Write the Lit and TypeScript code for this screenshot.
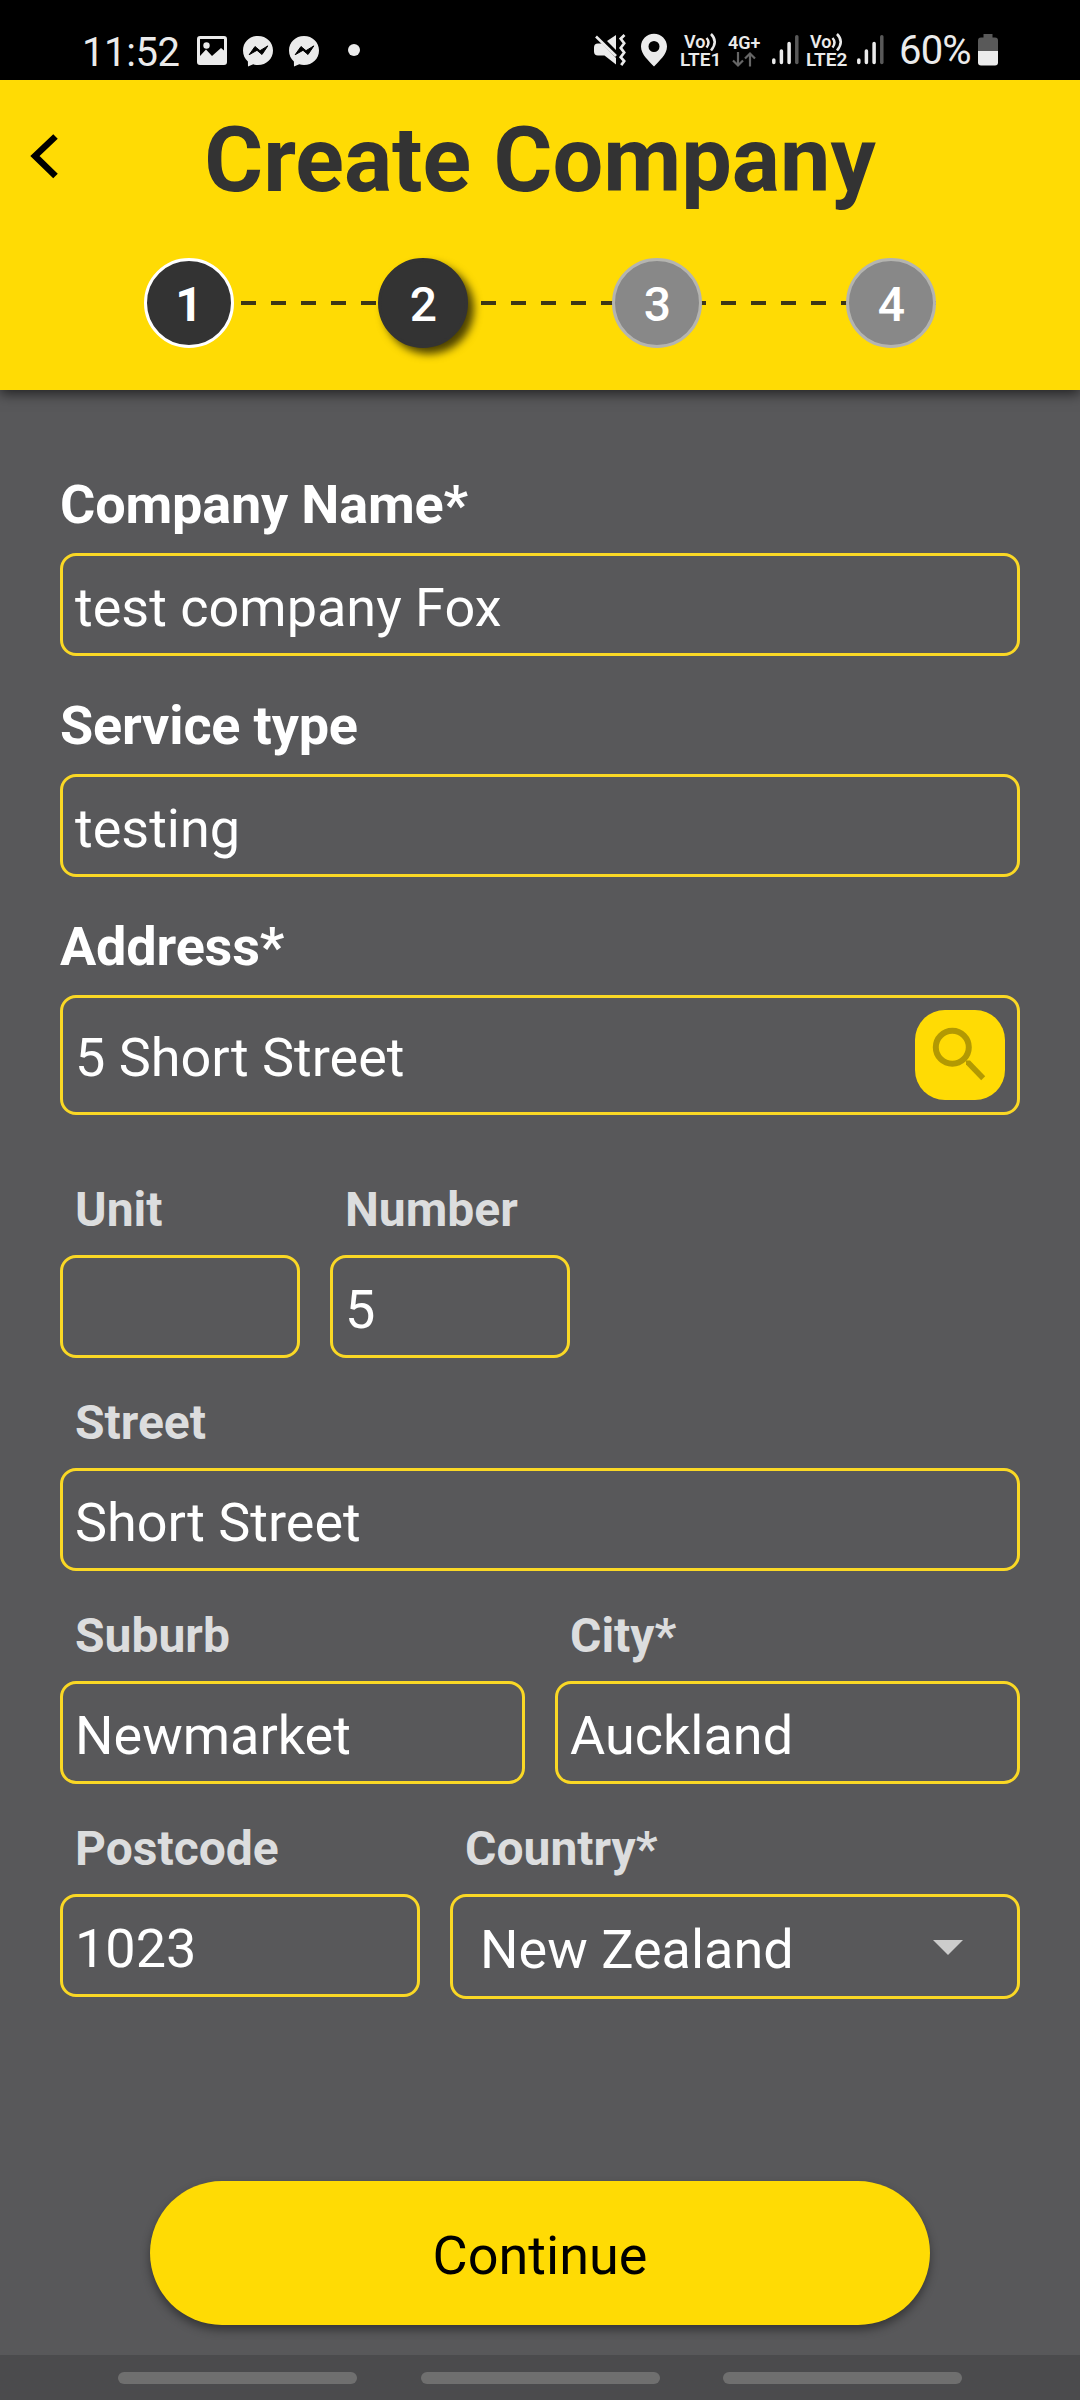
import { LitElement, html, css, nothing } from "lit";
import { customElement, property } from "lit/decorators.js";
import { classMap } from "lit/directives/class-map.js";

@customElement("status-bar")
class StatusBar extends LitElement {
  static styles = css`
    :host {
      display: flex;
      height: 80px;
      box-sizing: border-box;
      padding: 0 82px 0 82px;
      background: #000;
      color: #ebebeb;
      font-family: Roboto, sans-serif;
      justify-content: space-between;
    }
    svg {
      display: block;
      flex: none;
    }
    .side {
      display: flex;
      align-items: flex-start;
      height: 80px;
    }
    .clock {
      font-size: 40px;
      line-height: 48px;
      padding-top: 29px;
      width: 115px;
      letter-spacing: -0.4px;
      white-space: nowrap;
    }
    .percent {
      font-size: 40px;
      line-height: 48px;
      padding-top: 27px;
      width: 79px;
      letter-spacing: -0.8px;
      white-space: nowrap;
    }
    .volte {
      display: flex;
      flex-direction: column;
      padding-top: 32px;
      font-size: 19px;
      font-weight: 600;
      line-height: 18px;
      white-space: nowrap;
    }
    .volte.first {
      width: 47px;
    }
    .volte.second {
      width: 51px;
    }
    .vo {
      display: flex;
      height: 19px;
      padding-left: 4px;
      font-size: 18px;
      line-height: 19px;
    }
    .net {
      display: flex;
      flex-direction: column;
      width: 44px;
      padding: 34px 0 0 1px;
      font-size: 18px;
      font-weight: 600;
      line-height: 17px;
      white-space: nowrap;
    }
  `;

  private messenger() {
    return html`<svg width="46" height="80" viewBox="0 0 46 80">
      <path
        fill="#ebebeb"
        d="M15 36c8.500 0 15 6.300 15 14.500S23.500 65 15 65c-1.600 0-3.300-.3-4.800-.8L5 66.500l-.1-5C1.800 58.800 0 54.900 0 50.500 0 42.300 6.500 36 15 36z"
      />
      <path d="M6.200 54.700 12 46.500l5 4.200 7.800-4.800-5.800 8.600-5-4.200z" fill="#000" stroke="#000" stroke-width="1" stroke-linejoin="round" />
    </svg>`;
  }

  private signal(width: number) {
    return html`<svg width=${width} height="80" viewBox="0 0 ${width} 80" stroke-width="3.500" stroke-linecap="round">
      <g stroke="#ebebeb">
        <path d="M1.800 60v2.500M9.400 51v11.500M17.100 43.500v19" />
      </g>
      <path d="M24.800 36.800v25.700" stroke="#595959" />
    </svg>`;
  }

  private volte(slot: number) {
    return html`<div class="volte ${slot === 1 ? "first" : "second"}">
      <div class="vo">
        <span>Vo</span>
        <svg width="13" height="19" viewBox="0 0 13 19" fill="none" stroke="#ebebeb" stroke-width="2.500">
          <path d="M1.500 6q4 4.500 0 9.500M6 2q7.500 7.500 0 16.500" />
        </svg>
      </div>
      <span>LTE${slot}</span>
    </div>`;
  }

  render() {
    return html`
      <div class="side">
        <div class="clock">11:52</div>
        <svg width="46" height="80" viewBox="0 0 46 80">
          <path
            fill="#ebebeb"
            fill-rule="evenodd"
            d="M3 36h24a3 3 0 0 1 3 3v23a3 3 0 0 1-3 3H3a3 3 0 0 1-3-3V39a3 3 0 0 1 3-3zM3 39v17l6-6.500 6 6.500 9-8 3 2.500V39z"
          />
          <circle cx="9.500" cy="45.500" r="3.200" fill="#ebebeb" />
        </svg>
        ${this.messenger()} ${this.messenger()}
        <svg width="40" height="80" viewBox="0 0 40 80"><circle cx="19" cy="50" r="6" fill="#ebebeb" /></svg>
      </div>
      <div class="side">
        <svg width="47" height="80" viewBox="0 0 47 80">
          <path
            fill="#ebebeb"
            d="M0 47.500q0-4 4-4h4L22 58v6.500L10.500 55.500H4q-4 0-4-4zM13 41l9-6v15z"
          />
          <path d="M2 36.500 22 56" stroke="#ebebeb" stroke-width="2.600" />
          <path
            d="m30.500 35-3.800 3.700 3.500 4.600-3.500 4.600 3.500 4.600-3.500 4.600 3.500 4-3 4"
            fill="none"
            stroke="#ebebeb"
            stroke-width="2.700"
          />
        </svg>
        <svg width="39" height="80" viewBox="0 0 39 80">
          <path
            fill="#ebebeb"
            fill-rule="evenodd"
            d="M13 33.700c7.300 0 13 5.700 13 12.800C26 54.500 18 61 13 66.500 8 61 0 54.500 0 46.500c0-7.100 5.700-12.800 13-12.800zM13 41a5.500 5.500 0 1 0 0 11 5.500 5.500 0 0 0 0-11z"
          />
        </svg>
        ${this.volte(1)}
        <div class="net">
          <span>4G+</span>
          <svg width="32" height="18" viewBox="0 0 32 18" fill="none" stroke="#666" stroke-width="2.200">
            <path d="M10 1v13.500M5 9.500l5 5 5-5M22 15.500v-13M17 7.500l5-5 5 5" />
          </svg>
        </div>
        ${this.signal(34)} ${this.volte(2)} ${this.signal(42)}
        <div class="percent">60%</div>
        <svg width="20" height="80" viewBox="0 0 20 80">
          <path fill="#595959" d="M5.500 34h9v3.500H17a3 3 0 0 1 3 3V51H0V40.500a3 3 0 0 1 3-3h2.500z" />
          <path fill="#ebebeb" d="M0 51h20v11.500a3 3 0 0 1-3 3H3a3 3 0 0 1-3-3z" />
        </svg>
      </div>
    `;
  }
}

@customElement("step-header")
class StepHeader extends LitElement {
  @property({ type: Number }) current = 2;
  @property({ type: Number }) total = 4;

  static styles = css`
    :host {
      display: flex;
      flex-direction: column;
      position: relative;
      height: 310px;
      box-sizing: border-box;
      background: #ffdb04;
      box-shadow: 0 4px 12px rgba(0, 0, 0, 0.6);
      font-family: Roboto, sans-serif;
    }
    .top {
      display: grid;
      grid-template-columns: 90px 1fr 90px;
      height: 178px;
    }
    .title {
      margin: 0;
      padding-top: 29px;
      font-size: 90px;
      line-height: 104px;
      font-weight: 700;
      color: #333;
      text-align: center;
      white-space: nowrap;
    }
    .steps {
      display: flex;
      justify-content: space-between;
      width: 792px;
      margin: 0 auto;
      background: repeating-linear-gradient(
          90deg,
          transparent 0 7.500px,
          #3d3716 7.500px 22.500px,
          transparent 22.500px 30px
        )
        0 43px / 100% 4px no-repeat;
    }
    .step {
      display: flex;
      align-items: center;
      justify-content: center;
      width: 90px;
      height: 90px;
      box-sizing: border-box;
      border-radius: 50%;
      border: 3px solid #b4b4b0;
      background: #888;
      color: #fff;
      font-size: 48px;
      line-height: 56px;
      font-weight: 500;
      padding: 3px 0 0 1px;
    }
    .step.done {
      background: #333;
      border-color: #fff;
      font-weight: 700;
      padding-left: 0;
    }
    .step.active {
      background: #333;
      border-color: #333;
      box-shadow: 6px 6px 8px rgba(0, 0, 0, 0.7);
    }
  `;

  render() {
    const steps = Array.from({ length: this.total }, (_, i) => i + 1);
    return html`
      <div class="top">
        <svg width="90" height="178" viewBox="0 0 90 178">
          <path d="M55.500 56.500 35 76l20.500 20" fill="none" stroke="#000" stroke-width="6.500" />
        </svg>
        <h1 class="title">Create Company</h1>
      </div>
      <div class="steps">
        ${steps.map(
          (n) => html`<div class=${classMap({ step: true, done: n < this.current, active: n === this.current })}>${n}</div>`
        )}
      </div>
    `;
  }
}

@customElement("form-field")
class FormField extends LitElement {
  @property() label = "";
  @property() value = "";
  @property() kind: "text" | "search" | "select" = "text";
  @property({ type: Boolean }) small = false;

  static styles = css`
    :host {
      display: block;
      min-width: 0;
      font-family: Roboto, sans-serif;
    }
    .label {
      height: 71px;
      color: #fff;
      font-size: 54px;
      line-height: 46px;
      font-weight: 700;
      letter-spacing: -0.18px;
      white-space: nowrap;
    }
    .label.small {
      height: 74px;
      padding-left: 15px;
      color: #dcddde;
      font-size: 48px;
      line-height: 58px;
      letter-spacing: 0;
    }
    .box {
      display: flex;
      align-items: center;
      justify-content: space-between;
      height: 103px;
      box-sizing: border-box;
      border: 3px solid #fad825;
      border-radius: 16px;
      padding: 0 12px;
      color: #fff;
      font-size: 54px;
      line-height: 64px;
      white-space: nowrap;
    }
    .box.search {
      height: 120px;
    }
    .box.select {
      height: 105px;
      padding: 0 54px 0 27px;
    }
    .value {
      padding-top: 6px;
    }
    .box.search .value {
      padding-top: 5px;
    }
    .find {
      width: 90px;
      height: 90px;
      flex: none;
      border-radius: 30px;
      background: #ffdb04;
    }
    svg {
      display: block;
    }
    .caret {
      margin-top: 2px;
    }
  `;

  private adornment() {
    if (this.kind === "search") {
      return html`<div class="find">
        <svg width="90" height="90" viewBox="0 0 90 90" fill="none" stroke="#b29903">
          <circle cx="37.300" cy="37.300" r="16.500" stroke-width="6" />
          <path d="M51 50.500v4L66.200 70.300 70.200 66.300 55 50.500z" fill="#b29903" stroke="none" />
        </svg>
      </div>`;
    }
    if (this.kind === "select") {
      return html`<svg class="caret" width="30" height="15" viewBox="0 0 30 15"><path d="M0 0h30L15 15z" fill="#ccc" /></svg>`;
    }
    return nothing;
  }

  render() {
    return html`
      <div class=${classMap({ label: true, small: this.small })}>${this.label}</div>
      <div class="box ${this.kind}"><span class="value">${this.value}</span>${this.adornment()}</div>
    `;
  }
}

@customElement("app-root")
class AppRoot extends LitElement {
  static styles = css`
    :host {
      display: flex;
      flex-direction: column;
      width: 1080px;
      height: 2400px;
      overflow: hidden;
      background: #58585a;
      font-family: Roboto, sans-serif;
    }
    .form {
      display: flex;
      flex-direction: column;
      height: 1791px;
      box-sizing: border-box;
      padding: 92px 60px 0;
    }
    .main {
      display: flex;
      flex-direction: column;
      gap: 47px;
    }
    .details {
      display: flex;
      flex-direction: column;
      gap: 36px;
      padding-top: 66px;
    }
    .row {
      display: grid;
      align-items: start;
      gap: 30px;
    }
    .row.unit {
      grid-template-columns: 240px 240px;
    }
    .row.even {
      grid-template-columns: 1fr 1fr;
    }
    .row.country {
      grid-template-columns: 360px 1fr;
    }
    .continue {
      display: flex;
      align-items: center;
      justify-content: center;
      width: 780px;
      height: 144px;
      margin: 0 auto;
      box-sizing: border-box;
      padding: 5px 0 0;
      border: 0;
      border-radius: 72px;
      background: #ffdb04;
      box-shadow: 0 5px 10px rgba(0, 0, 0, 0.4);
      color: #000;
      font: 400 54px/64px Roboto, sans-serif;
    }
    .nav {
      display: flex;
      gap: 63.500px;
      height: 45px;
      margin-top: auto;
      box-sizing: border-box;
      padding: 17px 0 0 118px;
      background: #4b4b4d;
    }
    .pill {
      width: 239px;
      height: 12px;
      border-radius: 6px;
      background: #6f6f6f;
    }
  `;

  render() {
    return html`
      <status-bar></status-bar>
      <step-header></step-header>
      <div class="form">
        <div class="main">
          <form-field label="Company Name*" value="test company Fox"></form-field>
          <form-field label="Service type" value="testing"></form-field>
          <form-field label="Address*" value="5 Short Street" kind="search"></form-field>
        </div>
        <div class="details">
          <div class="row unit">
            <form-field small label="Unit"></form-field>
            <form-field small label="Number" value="5"></form-field>
          </div>
          <form-field small label="Street" value="Short Street"></form-field>
          <div class="row even">
            <form-field small label="Suburb" value="Newmarket"></form-field>
            <form-field small label="City*" value="Auckland"></form-field>
          </div>
          <div class="row country">
            <form-field small label="Postcode" value="1023"></form-field>
            <form-field small label="Country*" value="New Zealand" kind="select"></form-field>
          </div>
        </div>
      </div>
      <button class="continue">Continue</button>
      <div class="nav">
        <div class="pill"></div>
        <div class="pill"></div>
        <div class="pill"></div>
      </div>
    `;
  }
}
